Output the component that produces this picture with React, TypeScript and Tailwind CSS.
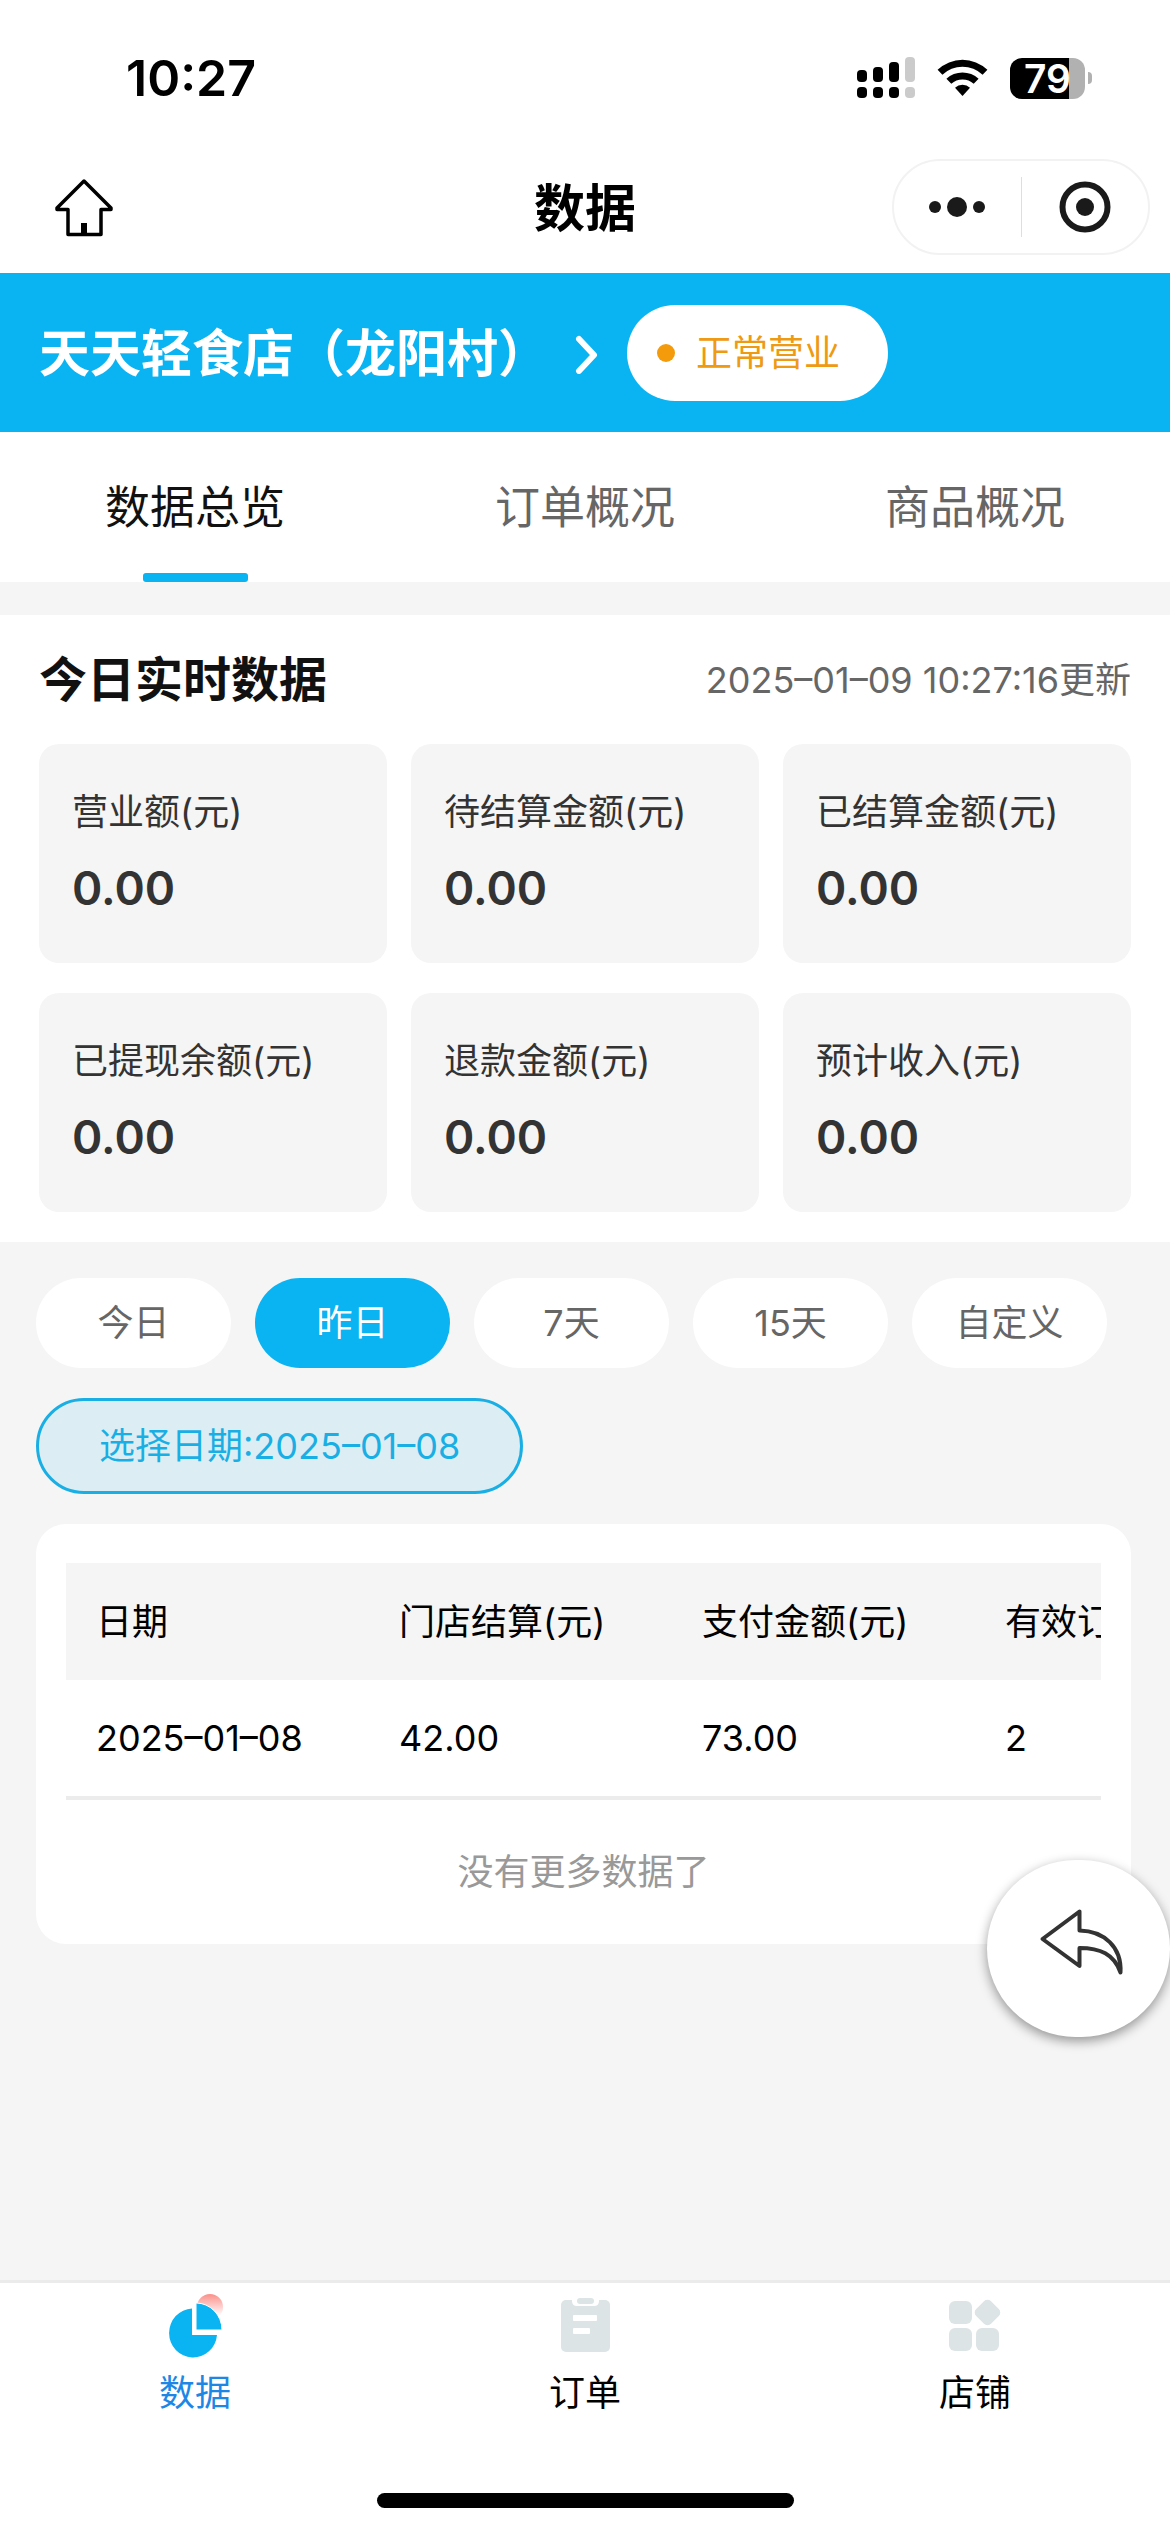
import React, { useState } from 'react';

const TABS = ['数据总览', '订单概况', '商品概况'] as const;
const RANGES = ['今日', '昨日', '7天', '15天', '自定义'] as const;

const STATS = [
  { label: '营业额(元)', value: '0.00' },
  { label: '待结算金额(元)', value: '0.00' },
  { label: '已结算金额(元)', value: '0.00' },
  { label: '已提现余额(元)', value: '0.00' },
  { label: '退款金额(元)', value: '0.00' },
  { label: '预计收入(元)', value: '0.00' },
];

const COLUMNS = ['日期', '门店结算(元)', '支付金额(元)', '有效订单'];
const ROWS = [['2025–01–08', '42.00', '73.00', '2']];

function StatusBar() {
  return (
    <div className="flex h-[156px] items-center justify-between pl-[126px] pr-[78px]">
      <span className="text-[50px] leading-[60px] font-semibold text-black">10:27</span>
      <div className="flex items-center gap-[22px]">
        <svg width="58" height="42" viewBox="0 0 58 42">
          <rect x="0" y="13" width="10" height="12" rx="4" />
          <rect x="16" y="10" width="10" height="15" rx="4" />
          <rect x="32" y="5" width="10" height="20" rx="4" />
          <rect x="48" y="0" width="10" height="25" rx="4" fill="#cbcbcb" />
          <rect x="0" y="30" width="10" height="11" rx="4" />
          <rect x="16" y="30" width="10" height="11" rx="4" />
          <rect x="32" y="30" width="10" height="11" rx="4" />
          <rect x="48" y="30" width="10" height="11" rx="4" fill="#cbcbcb" />
        </svg>
        <svg width="51" height="38" viewBox="0 0 51 38">
          <path d="M0.6 10.8A36 36 0 0 1 50.4 10.8L45.6 15.8A29 29 0 0 0 5.4 15.8Z" />
          <path d="M9.4 19.8A23.5 23.5 0 0 1 41.6 19.8L36.7 24.8A16.5 16.5 0 0 0 14.3 24.8Z" />
          <path d="M18 28.8A11 11 0 0 1 33 28.8L25.5 37Z" />
        </svg>
        <div className="flex items-center gap-[3px]">
          <div className="flex h-[41px] w-[75px] items-center justify-center rounded-[12px] bg-linear-to-r from-black from-79% to-[#b1b1b1] to-79%">
            <span className="text-[39px] leading-[41px] font-semibold text-white">79</span>
          </div>
          <div className="h-[12px] w-[4px] rounded-r-full bg-[#b1b1b1]" />
        </div>
      </div>
    </div>
  );
}

function TitleBar() {
  return (
    <header className="grid h-[117px] grid-cols-[1fr_auto_1fr] items-start pt-[3px]">
      <button aria-label="首页" className="mt-[19px] ml-[54px] w-[60px]">
        <svg width="60" height="60" viewBox="0 0 60 60" fill="none" stroke="#000" strokeWidth="3.5" strokeLinejoin="round">
          <path d="M30 3L3 30V31.5H14V56.5H47V31.5H57V30Z" />
          <path d="M30 45V56" strokeWidth="6" />
        </svg>
      </button>
      <h1 className="mt-[20px] text-center text-[51px] leading-[60px] font-bold text-black">数据</h1>
      <div className="mr-[20px] flex h-[96px] w-[258px] items-center justify-self-end rounded-full border-2 border-[#f2f2f2]">
        <button aria-label="更多" className="flex h-full flex-1 items-center justify-center">
          <svg width="56" height="22" viewBox="0 0 56 22" fill="#1a1a1a">
            <circle cx="6" cy="11" r="6" />
            <circle cx="28" cy="11" r="10" />
            <circle cx="50" cy="11" r="6" />
          </svg>
        </button>
        <div className="h-[60px] w-px bg-[#dedede]" />
        <button aria-label="关闭" className="flex h-full flex-1 items-center justify-center">
          <svg width="52" height="52" viewBox="0 0 52 52">
            <circle cx="26" cy="26" r="22.5" fill="none" stroke="#1a1a1a" strokeWidth="6" />
            <circle cx="26" cy="26" r="9" fill="#1a1a1a" />
          </svg>
        </button>
      </div>
    </header>
  );
}

function PieIcon() {
  return (
    <svg width="60" height="66" viewBox="-3 0 60 66">
      <defs>
        <linearGradient id="pieGlow" x1="0" y1="0" x2="0" y2="1">
          <stop offset="0" stopColor="#fb8f89" />
          <stop offset="0.85" stopColor="#fff" />
        </linearGradient>
      </defs>
      <circle cx="42" cy="14" r="13" fill="url(#pieGlow)" />
      <path d="M24 15.500A24 24.500 0 1 0 49 42H24Z" fill="#0ab3f2" />
      <path d="M28 10A26 27 0 0 1 54 37H28Z" fill="#0ab3f2" stroke="#fff" strokeWidth="1" />
    </svg>
  );
}

function OrderIcon() {
  return (
    <svg width="60" height="66" viewBox="0 0 60 66">
      <rect x="6" y="7" width="49" height="52" rx="5" fill="#dde4e6" />
      <path d="M17 5H44V8Q44 13 39 13H22Q17 13 17 8Z" fill="#fff" />
      <rect x="22" y="5" width="17" height="6" rx="3" fill="#dde4e6" />
      <rect x="18" y="22" width="24" height="6" rx="1" fill="#fff" />
      <rect x="18" y="35" width="17" height="6" rx="1" fill="#fff" />
    </svg>
  );
}

function ShopIcon() {
  return (
    <svg width="60" height="66" viewBox="0 0 60 66" fill="#dde4e6">
      <rect x="4" y="8" width="23" height="23" rx="6" />
      <rect x="4" y="35" width="23" height="23" rx="6" />
      <rect x="31" y="35" width="23" height="23" rx="6" />
      <rect x="32" y="9" width="21" height="21" rx="5" transform="rotate(45 42.5 19.5)" />
    </svg>
  );
}

const NAV = [
  { label: '数据', icon: <PieIcon />, active: true },
  { label: '订单', icon: <OrderIcon />, active: false },
  { label: '店铺', icon: <ShopIcon />, active: false },
];

export default function App() {
  const [tab, setTab] = useState<string>('数据总览');
  const [range, setRange] = useState<string>('昨日');

  return (
    <div className="flex min-h-screen flex-col bg-[#f5f5f5] font-['Inter','Noto_Sans_CJK_SC',sans-serif]">
      <div className="bg-white">
        <StatusBar />
        <TitleBar />
      </div>

      {/* Store */}
      <div className="flex h-[159px] items-center bg-[#0ab3f2] pl-[39px]">
        <button className="flex items-center gap-[26px] pt-[3px] text-[51px] leading-[60px] font-bold text-white">
          天天轻食店（龙阳村）
          <svg width="24" height="40" viewBox="0 0 24 40" fill="none" stroke="#fff" strokeWidth="6" strokeLinecap="round" strokeLinejoin="round">
            <path d="M4 5L19 21L4 37" />
          </svg>
        </button>
        <div className="ml-[28px] flex h-[96px] items-center gap-[21px] rounded-full bg-white pr-[48px] pl-[30px]">
          <span className="h-[18px] w-[18px] rounded-full bg-[#f49b0b]" />
          <span className="text-4xl leading-[48px] text-[#ee9a12]">正常营业</span>
        </div>
      </div>

      <div className="grid h-[150px] grid-cols-3 bg-white">
        {TABS.map((t) => (
          <button
            key={t}
            onClick={() => setTab(t)}
            className="flex flex-col items-center justify-between pt-[46px]"
          >
            <span className={`text-[45px] leading-[60px] ${t === tab ? 'text-[#111]' : 'text-[#666]'}`}>
              {t}
            </span>
            {t === tab && <span className="h-[9px] w-[105px] rounded-[3px] bg-[#0ab3f2]" />}
          </button>
        ))}
      </div>

      {/* Realtime data */}
      <section className="mt-[33px] bg-white px-[39px] pb-[30px]">
        <div className="flex h-[129px] items-center justify-between">
          <h2 className="text-5xl leading-[60px] font-bold text-[#111]">今日实时数据</h2>
          <span className="text-4xl leading-[48px] text-[#666]">2025–01–09 10:27:16更新</span>
        </div>
        <div className="grid grid-cols-3 gap-x-[24px] gap-y-[30px]">
          {STATS.map((s) => (
            <div key={s.label} className="h-[219px] rounded-[20px] bg-[#f5f5f5] pt-[44px] pl-[33px]">
              <p className="text-4xl leading-[48px] text-[#333]">{s.label}</p>
              <p className="mt-[22px] text-[46px] leading-[60px] font-semibold text-[#333]">{s.value}</p>
            </div>
          ))}
        </div>
      </section>

      <main className="flex-1 px-[36px] pt-[36px]">
        <div className="flex gap-[24px]">
          {RANGES.map((r) => (
            <button
              key={r}
              onClick={() => setRange(r)}
              className={`h-[90px] w-[195px] rounded-full text-4xl leading-[48px] ${
                r === range ? 'bg-[#0ab3f2] text-white' : 'bg-white text-[#666]'
              }`}
            >
              {r}
            </button>
          ))}
        </div>

        <button className="mt-[30px] h-[96px] rounded-full border-3 border-[#1aafe4] bg-[#dceef4] px-[60px] text-4xl leading-[48px] text-[#1aafe4]">
          选择日期:2025–01–08
        </button>

        <div className="mt-[30px] mr-[3px] rounded-[30px] bg-white px-[30px] pt-[39px]">
          <div className="overflow-x-auto [scrollbar-width:none]">
            <table className="w-[1212px] table-fixed border-separate border-spacing-0 text-left text-4xl leading-[48px] text-black">
              <thead className="bg-[#f5f5f5]">
                <tr className="h-[117px]">
                  {COLUMNS.map((c) => (
                    <th key={c} className="pl-[30px] font-normal">{c}</th>
                  ))}
                </tr>
              </thead>
              <tbody>
                {ROWS.map((row) => (
                  <tr key={row[0]} className="h-[120px]">
                    {row.map((cell, i) => (
                      <td key={i} className="border-b-4 border-[#ececec] pl-[30px]">{cell}</td>
                    ))}
                  </tr>
                ))}
              </tbody>
            </table>
          </div>
          <p className="flex h-[144px] items-center justify-center text-4xl leading-[48px] text-[#999]">
            没有更多数据了
          </p>
        </div>
      </main>

      <button
        aria-label="返回"
        className="fixed right-0 bottom-[495px] h-[177px] w-[183px] rounded-full bg-white shadow-[0_4px_12px_rgba(0,0,0,0.4)]"
      >
        <svg width="183" height="177" viewBox="0 0 183 177" fill="none" stroke="#333" strokeWidth="4" strokeLinejoin="round">
          <path d="M55.5 79L92.5 51.5V70.5C117 71 135 87 133.5 112.5C127 94 113 88 92.5 88V106Z" />
        </svg>
      </button>

      <nav className="border-t-3 border-[#ebebeb] bg-white">
        <div className="grid grid-cols-3">
          {NAV.map((n) => (
            <a key={n.label} href="#" className="flex flex-col items-center pt-[10px]">
              {n.icon}
              <span className={`mt-[10px] text-4xl leading-[48px] ${n.active ? 'text-[#1e87e5]' : 'text-black'}`}>
                {n.label}
              </span>
            </a>
          ))}
        </div>
        <div className="mx-auto mt-[76px] mb-[24px] h-[15px] w-[417px] rounded-full bg-black" />
      </nav>
    </div>
  );
}
